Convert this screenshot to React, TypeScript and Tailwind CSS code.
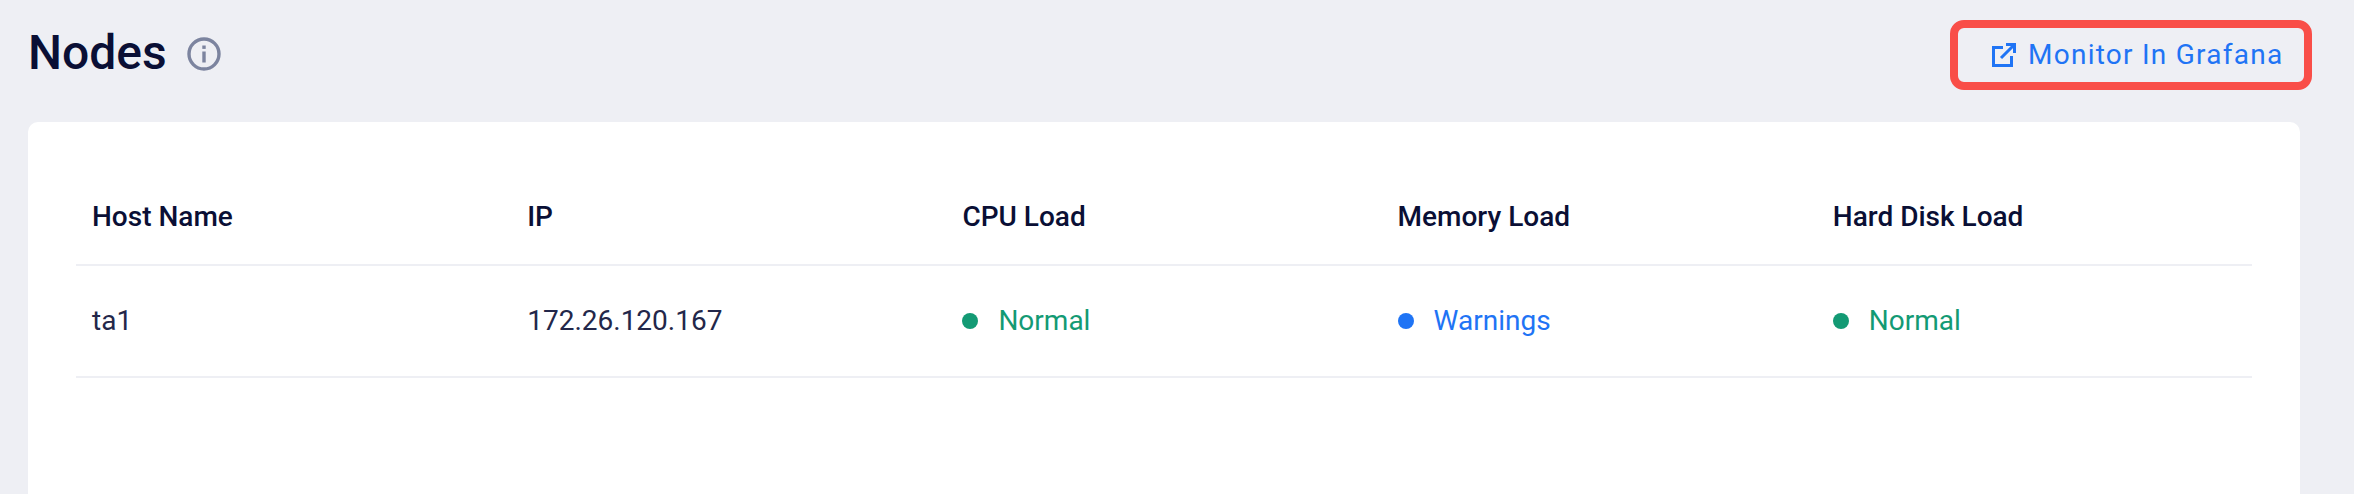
import React from "react";

const headers = ["Host Name", "IP", "CPU Load", "Memory Load", "Hard Disk Load"];

function Status({ label, dot, text }: { label: string; dot: string; text: string }) {
  return (
    <div className={`flex items-center gap-5 pl-4 ${text}`}>
      <span className={`h-4 w-4 rounded-full ${dot}`} />
      <span>{label}</span>
    </div>
  );
}

export default function App() {
  return (
    <div className="flex h-[494px] w-[2354px] flex-col overflow-hidden bg-[#eeeff4] font-['Roboto',sans-serif]">
      <header className="flex h-[122px] shrink-0 items-start justify-between pl-7 pr-[42px]">
        <div className="flex items-center gap-5 pt-[21px]">
          <h1 className="text-[48px] leading-[64px] font-medium text-[#0a0f35]">Nodes</h1>
          <svg width="34" height="34" viewBox="0 0 34 34" fill="none" className="mt-[2px]">
            <circle cx="17" cy="17" r="15" stroke="#7c849f" strokeWidth="3.4" />
            <rect x="15.3" y="14.5" width="3.4" height="11" fill="#7c849f" />
            <rect x="15.3" y="8.5" width="3.4" height="3.4" fill="#7c849f" />
          </svg>
        </div>
        <button className="mt-5 flex h-[70px] w-[362px] items-center gap-3 rounded-[14px] border-8 border-[#f94e48] pl-[34px] text-[28px] tracking-[1.25px] text-[#1f74f5]">
          <svg width="24" height="24" viewBox="0 0 24 24" fill="none" stroke="#1f74f5" strokeWidth="3">
            <path d="M11 4.5H1.5V22.5H19.5V13" />
            <path d="M9 15L22 2" />
            <path d="M14 1.5H22.5V10" />
          </svg>
          <span>Monitor In Grafana</span>
        </button>
      </header>
      <main className="ml-7 mr-[54px] flex-1 rounded-t-[10px] bg-white px-12 pt-[46px]">
        <div className="grid h-[98px] grid-cols-5 items-center border-b-2 border-[#eeeff4] pt-[2px] text-[28px] font-medium text-[#0a0f35]">
          {headers.map((h) => (
            <div key={h} className="pl-4">{h}</div>
          ))}
        </div>
        <div className="grid h-[112px] grid-cols-5 items-center border-b-2 border-[#eeeff4] text-[28px] text-[#23274a]">
          <div className="pl-4">ta1</div>
          <div className="pl-4">172.26.120.167</div>
          <Status label="Normal" dot="bg-[#139a74]" text="text-[#139a74]" />
          <Status label="Warnings" dot="bg-[#1f74f5]" text="text-[#1f74f5]" />
          <Status label="Normal" dot="bg-[#139a74]" text="text-[#139a74]" />
        </div>
      </main>
    </div>
  );
}
